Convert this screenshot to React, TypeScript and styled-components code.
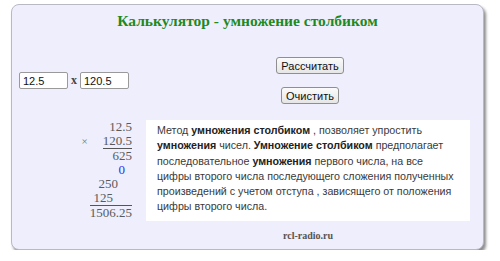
import React from "react";
import styled, { createGlobalStyle } from "styled-components";

const Global = createGlobalStyle`
  html, body { margin: 0; padding: 0; background: #ffffff; }
  body { font-family: "Liberation Sans", Arial, sans-serif; }
`;

const Panel = styled.div`
  box-sizing: border-box;
  margin: 4px 0 0 11px;
  width: 473px;
  height: 246px;
  background: #eeeefd;
  border: 1px solid #b9b9c4;
  border-radius: 8px;
  box-shadow: 2px 3px 3px rgba(0, 0, 0, 0.45);
  padding: 6px 13px 0 7px;
`;

const Title = styled.h1`
  margin: 0 0 0 6px;
  text-align: center;
  font-family: "Liberation Serif", "Times New Roman", serif;
  font-weight: bold;
  font-size: 15.5px;
  line-height: 20px;
  color: #1e8a1e;
`;

const Grid = styled.div`
  display: grid;
  grid-template-columns: 127px 324px;
  row-gap: 16px;
  margin-top: 26px;
`;

const InputRow = styled.div`
  display: flex;
  align-items: center;
  align-self: center;
`;

const NumInput = styled.input`
  box-sizing: border-box;
  width: 49px;
  height: 17px;
  padding: 1px 3px;
  border: 1px solid #9a9a9a;
  border-radius: 2px;
  font-family: "Liberation Sans", Arial, sans-serif;
  font-size: 11px;
  color: #111;
  background: #fff;
`;

const Times = styled.span`
  font-family: "Liberation Serif", serif;
  font-weight: bold;
  font-size: 12px;
  color: #444;
  margin: 0 3px 0 3px;
`;

const Buttons = styled.div`
  display: flex;
  flex-direction: column;
  align-items: center;
  gap: 13px;
  padding-left: 4px;
`;

const Btn = styled.button`
  box-sizing: border-box;
  height: 17px;
  padding: 0 4px;
  border: 1px solid #8f8f8f;
  border-radius: 3px;
  background: linear-gradient(#fbfbfb, #e6e6e6);
  font-family: "Liberation Sans", Arial, sans-serif;
  font-size: 11px;
  color: #111;
`;

const Column = styled.div`
  display: flex;
  flex-direction: column;
  align-items: flex-end;
  padding-right: 14px;
  font-family: "Liberation Serif", "Times New Roman", serif;
  font-size: 13px;
  color: #5a5a5a;
`;

const Num = styled.div<{ $shift?: number; $top?: boolean; $blue?: boolean }>`
  margin-right: ${(p) => p.$shift ?? 0}px;
  border-top: ${(p) => (p.$top ? "1px solid #555" : "none")};
  color: ${(p) => (p.$blue ? "#2233ee" : "#5a5a5a")};
  display: flex;
  align-items: baseline;
  line-height: 14.2px;
`;

const Under = styled.span`
  border-bottom: 1px solid #555;
  line-height: 13.3px;
`;

const Sign = styled.span`
  font-size: 11px;
  color: #777;
  margin-right: 15px;
`;

const Info = styled.div`
  background: #ffffff;
  padding: 3px 16px 5px 11px;
  font-family: "Liberation Sans", Arial, sans-serif;
  font-size: 10.7px;
  line-height: 15.3px;
  color: #3a3a3a;
  b { color: #222; }
`;

const Footer = styled.div`
  grid-column: 2;
  text-align: center;
  font-family: "Liberation Serif", "Times New Roman", serif;
  font-weight: bold;
  font-size: 10px;
  color: #555;
  margin-top: -7px;
`;

export default function App() {
  return (
    <>
      <Global />
      <Panel>
        <Title>Калькулятор - умножение столбиком</Title>
        <Grid>
          <InputRow>
            <NumInput defaultValue="12.5" />
            <Times>x</Times>
            <NumInput defaultValue="120.5" />
          </InputRow>
          <Buttons>
            <Btn>Рассчитать</Btn>
            <Btn>Очистить</Btn>
          </Buttons>
          <Column>
            <Num>12.5</Num>
            <Num>
              <Sign>×</Sign>
              <Under>120.5</Under>
            </Num>
            <Num>625</Num>
            <Num $blue $shift={7}>0</Num>
            <Num $shift={14}>250</Num>
            <Num $shift={19}>125</Num>
            <Num $top>1506.25</Num>
          </Column>
          <Info>
            Метод <b>умножения столбиком</b> , позволяет упростить <b>умножения</b> чисел.{" "}
            <b>Умножение столбиком</b> предполагает последовательное <b>умножения</b> первого
            числа, на все цифры второго числа последующего сложения полученных произведений с
            учетом отступа , зависящего от положения цифры второго числа.
          </Info>
          <Footer>rcl-radio.ru</Footer>
        </Grid>
      </Panel>
    </>
  );
}
